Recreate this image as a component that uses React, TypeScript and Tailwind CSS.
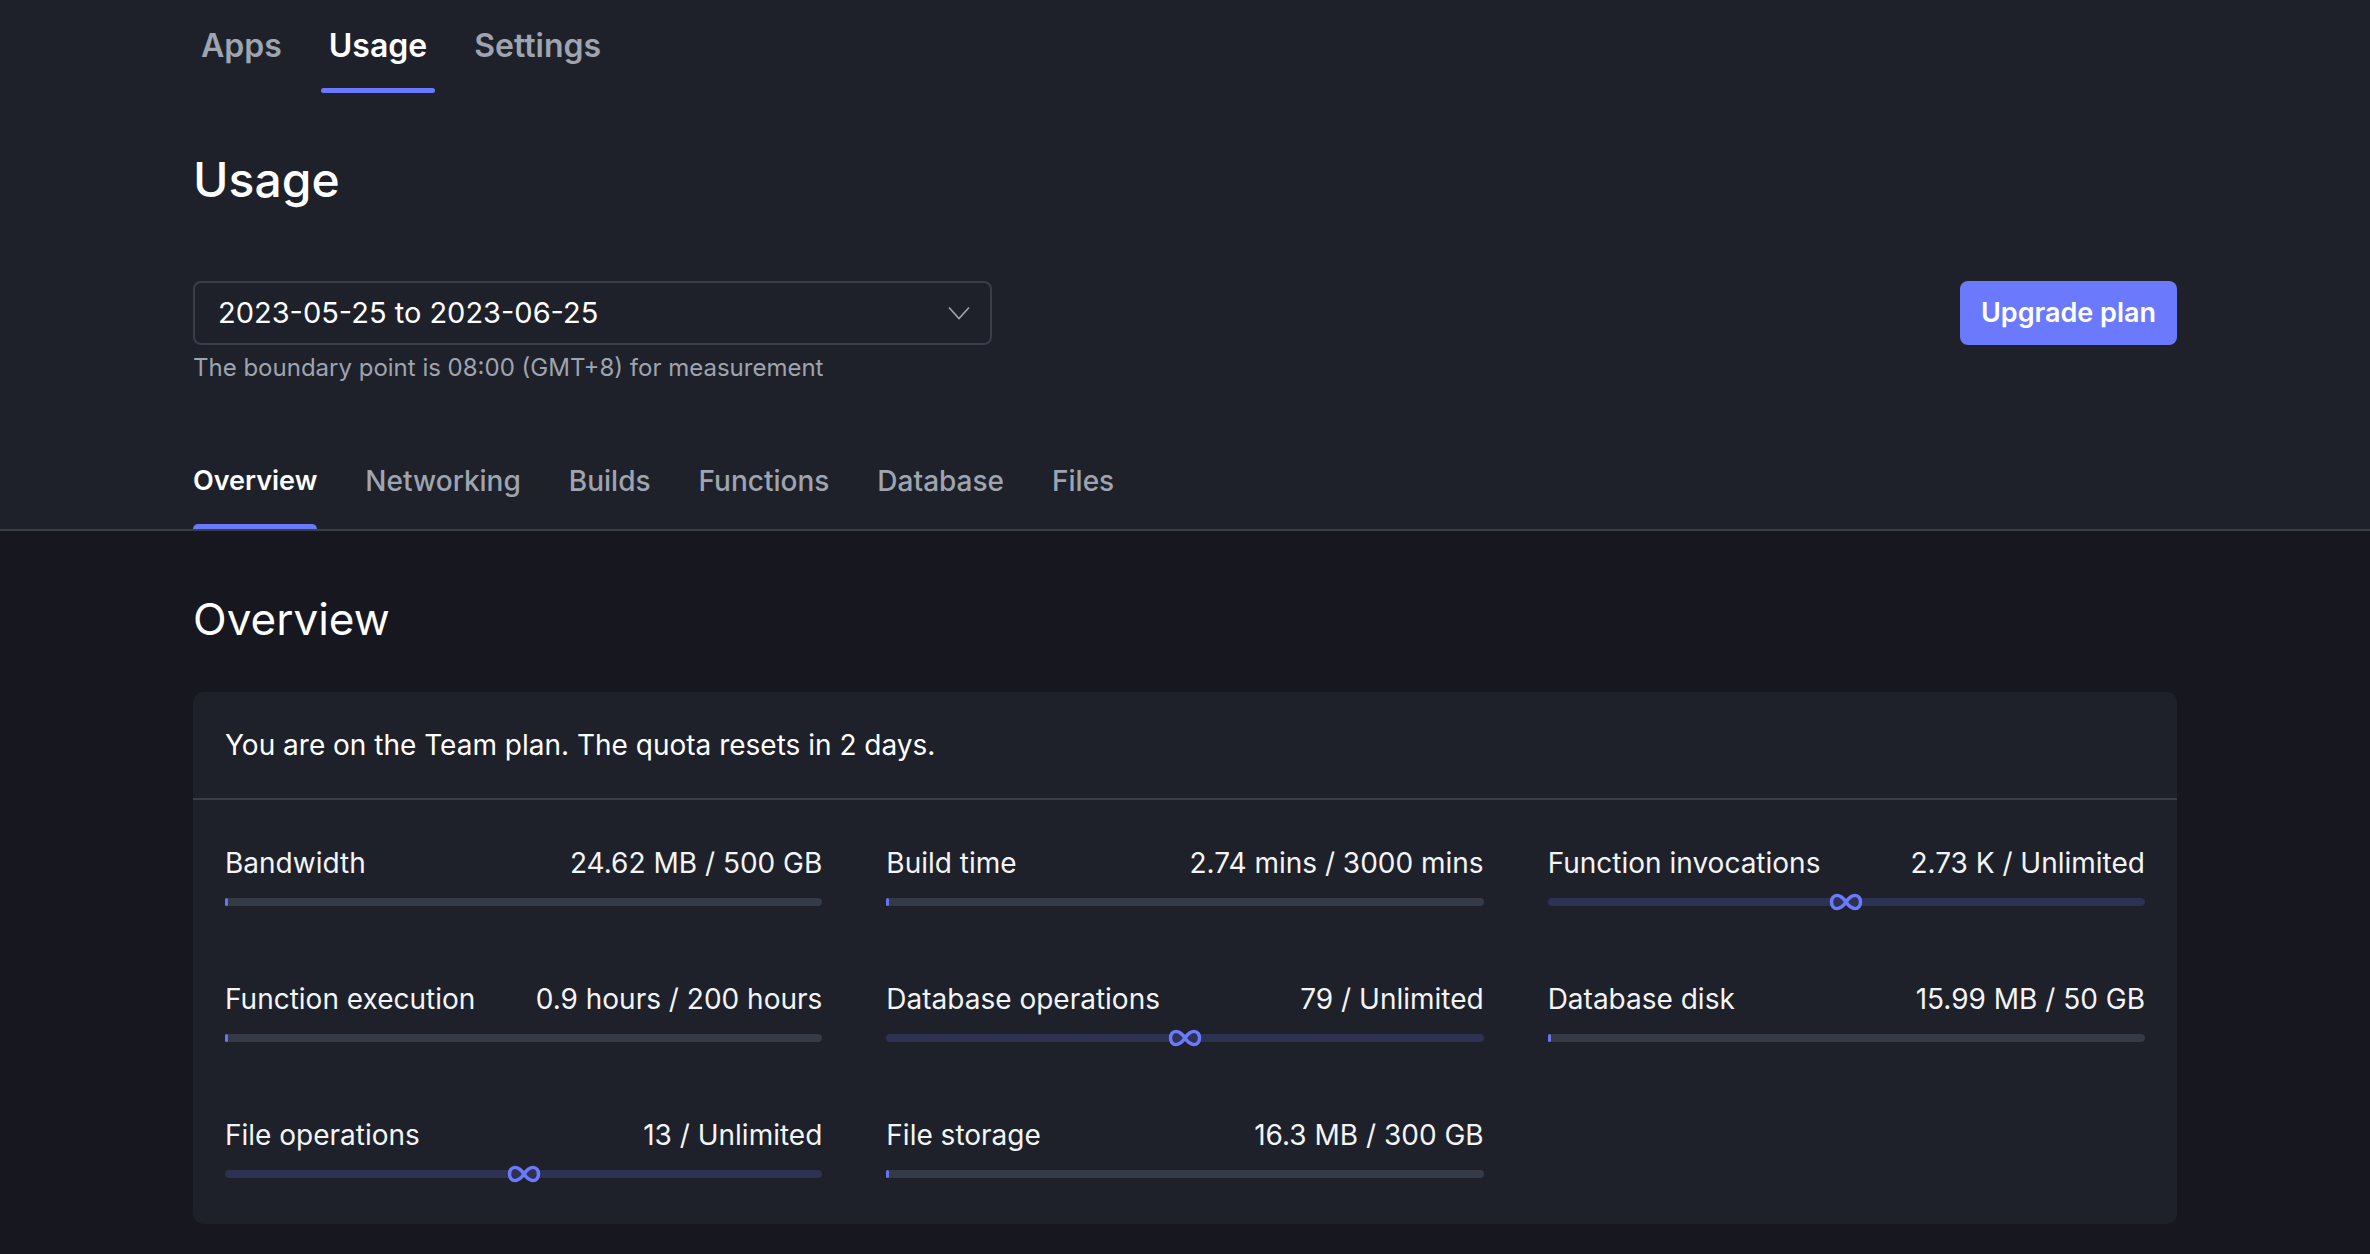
type Metric = {
    label: string;
    value: string;
    percent?: number;
    unlimited?: boolean;
};

const metrics: Metric[] = [
    { label: 'Bandwidth', value: '24.62 MB / 500 GB', percent: 0.05 },
    { label: 'Build time', value: '2.74 mins / 3000 mins', percent: 0.09 },
    { label: 'Function invocations', value: '2.73 K / Unlimited', unlimited: true },
    { label: 'Function execution', value: '0.9 hours / 200 hours', percent: 0.45 },
    { label: 'Database operations', value: '79 / Unlimited', unlimited: true },
    { label: 'Database disk', value: '15.99 MB / 50 GB', percent: 0.03 },
    { label: 'File operations', value: '13 / Unlimited', unlimited: true },
    { label: 'File storage', value: '16.3 MB / 300 GB', percent: 0.005 },
];

const InfinityMark = () => (
    <svg width="36" height="20" viewBox="0 0 36 20" fill="none" className="absolute left-1/2 top-1/2 -translate-x-1/2 -translate-y-1/2">
        <path
            d="M18 10C15 5.5 12 3.5 9 3.5C5.5 3.5 3.5 6.5 3.5 10C3.5 13.5 5.5 16.5 9 16.5C12 16.5 15 14.5 18 10C21 5.5 24 3.5 27 3.5C30.5 3.5 32.5 6.5 32.5 10C32.5 13.5 30.5 16.5 27 16.5C24 16.5 21 14.5 18 10Z"
            stroke="#6b7afd"
            strokeWidth="3.5"
        />
    </svg>
);

const MetricItem = ({ metric }: { metric: Metric }) => {
    return (
        <div className="flex flex-col">
            <div className="flex justify-between items-center text-[28px] leading-[40px] text-[#f3f4f6]">
                <span>{metric.label}</span>
                <span>{metric.value}</span>
            </div>
            <div
                className={`relative mt-[15px] h-[8px] rounded-full ${metric.unlimited ? 'bg-[#2d3152]' : 'bg-[#353a47]'}`}
            >
                {metric.unlimited ? (
                    <InfinityMark />
                ) : (
                    <div
                        className="h-full rounded-full bg-[#6b72f5] min-w-[3px]"
                        style={{ width: `${metric.percent}%` }}
                    />
                )}
            </div>
        </div>
    );
};

const App = () => {
    const topTabs = ['Apps', 'Usage', 'Settings'];
    const subTabs = ['Overview', 'Networking', 'Builds', 'Functions', 'Database', 'Files'];

    return (
        <div className="min-h-screen bg-[#16171f] text-white font-['Inter',_'Noto_Sans',_sans-serif]">
            {/* header area */}
            <div className="bg-[#1e212a] border-b-2 border-[#3a3e4a]">
                <div className="w-[1984px] mx-auto">
                    <nav className="flex gap-[31px]">
                        {topTabs.map((tab) => (
                            <div key={tab} className="flex flex-col pt-[22px]">
                                <span
                                    className={`px-2 text-[32px] leading-[48px] font-semibold ${tab === 'Usage' ? 'text-white' : 'text-[#9ea4b0]'}`}
                                >
                                    {tab}
                                </span>
                                <div className={`mt-[18px] h-[5px] rounded-full ${tab === 'Usage' ? 'bg-[#6b7afd]' : 'bg-transparent'}`} />
                            </div>
                        ))}
                    </nav>

                    <h1 className="mt-[58px] text-[48px] leading-[58px] font-medium">Usage</h1>

                    <div className="mt-[72px] flex justify-between items-start">
                        <div>
                            <div className="w-[799px] h-[64px] flex items-center justify-between pl-[23px] pr-[20px] border-2 border-[#3a3e4a] rounded-[8px] text-[29px]">
                                <span>2023-05-25 to 2023-06-25</span>
                                <svg width="22" height="14" viewBox="0 0 22 14" fill="none">
                                    <path d="M1 1.5L11 12.5L21 1.5" stroke="#9ea4b0" strokeWidth="1.6" />
                                </svg>
                            </div>
                            <p className="mt-[5px] text-[24px] leading-[36px] text-[#9ea4b0]">
                                The boundary point is 08:00 (GMT+8) for measurement
                            </p>
                        </div>
                        <button className="h-[64px] w-[217px] rounded-[8px] bg-[#6b7afd] text-[27px] font-semibold text-white">
                            Upgrade plan
                        </button>
                    </div>

                    <nav className="mt-[75px] flex gap-[48px]">
                        {subTabs.map((tab) => (
                            <div key={tab} className="flex flex-col">
                                <span
                                    className={`leading-[40px] ${tab === 'Overview' ? 'text-[27px] text-white font-semibold' : 'text-[28px] text-[#9ea4b0] font-medium'}`}
                                >
                                    {tab}
                                </span>
                                <div className={`mt-[23px] h-[5px] rounded-t-full ${tab === 'Overview' ? 'bg-[#6b7afd]' : 'bg-transparent'}`} />
                            </div>
                        ))}
                    </nav>
                </div>
            </div>

            {/* overview */}
            <div className="w-[1984px] mx-auto pb-[30px]">
                <h2 className="mt-[62px] text-[44px] leading-[53px]">Overview</h2>

                <div className="mt-[46px] bg-[#1e212a] rounded-[10px]">
                    <div className="h-[108px] flex items-center px-[32px] border-b-2 border-[#3a3e4a] text-[28px]">
                        You are on the Team plan. The quota resets in 2 days.
                    </div>
                    <div className="grid grid-cols-3 gap-x-[64px] gap-y-[73px] px-[32px] pt-[43px] pb-[46px]">
                        {metrics.map((m) => (
                            <MetricItem key={m.label} metric={m} />
                        ))}
                    </div>
                </div>
            </div>
        </div>
    );
};

export default App;
